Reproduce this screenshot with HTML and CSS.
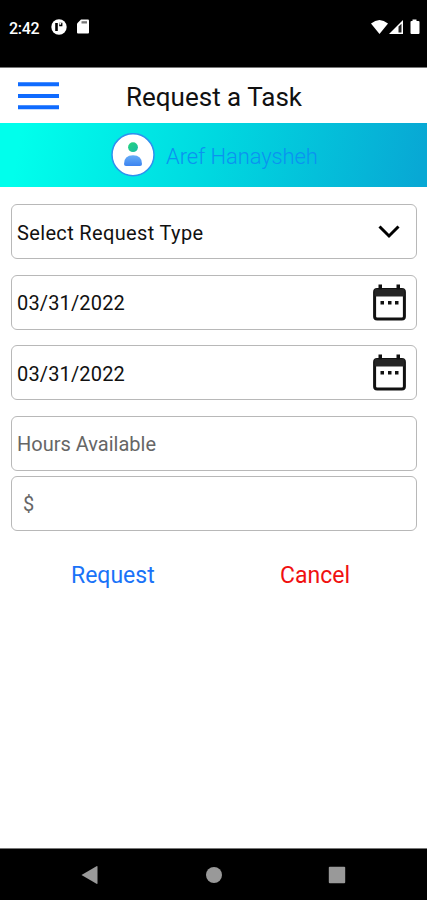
FILE: index.html
```html
<!DOCTYPE html>
<html lang="en">
<head>
  <meta charset="UTF-8">
  <meta name="viewport" content="width=device-width, initial-scale=1.0">
  <title>Request a Task</title>
  <link rel="stylesheet" href="styles.css">
</head>
<body>
  <div class="status-bar">
    <span class="time">2:42</span>
    <svg class="app-icon" width="16" height="16" viewBox="0 0 16 16">
      <circle cx="8" cy="8" r="7.7" fill="#fff"/>
      <path d="M4.200 4h2.600v8H4.200zM8.200 3.800h3.200v3.400H8.200z" fill="#000"/>
      <circle cx="9.300" cy="4.800" r="1" fill="#fff"/>
    </svg>
    <svg class="sd-icon" width="12" height="15" viewBox="0 0 12 15">
      <path d="M4 .5h7q1 0 1 1v12q0 1-1 1H1q-1 0-1-1V4.500z" fill="#fff"/>
      <path d="M4.500 2.200h5.500v2.300H4.500z" fill="#777"/>
    </svg>
    <svg class="signals" width="50" height="16" viewBox="0 0 50 16">
      <path d="M1 4.500Q9.500 -2.500 18 4.500L9.500 15z" fill="#fff"/>
      <path d="M19 15L33 1v14z" fill="#fff"/>
      <path d="M28.500 7.500l3-2.800v8.800h-3z" fill="#222"/>
      <path d="M42.500 .5h4v1.500h2q1 0 1 1v11q0 1-1 1h-7q-1 0-1-1V3q0-1 1-1h1z" fill="#fff"/>
    </svg>
  </div>

  <div class="header">
    <svg class="menu" width="41" height="28" viewBox="0 0 41 28">
      <path d="M0 2.200h41M0 13.900h41M0 25.200h41" stroke="#0f6bff" stroke-width="4"/>
    </svg>
    <h1>Request a Task</h1>
  </div>

  <div class="user">
    <svg width="44" height="44" viewBox="0 0 44 44">
      <defs>
        <linearGradient id="head" x1="0" y1="0" x2="1" y2="1">
          <stop offset="0" stop-color="#25d57c"/>
          <stop offset="1" stop-color="#18b9a6"/>
        </linearGradient>
        <linearGradient id="body" x1="0" y1="0" x2="0" y2="1">
          <stop offset="0" stop-color="#67adf7"/>
          <stop offset="1" stop-color="#3c83f0"/>
        </linearGradient>
      </defs>
      <circle cx="22" cy="21.700" r="21" fill="#fff" stroke="#2e90ef" stroke-width="1.500"/>
      <circle cx="22" cy="14.200" r="4.900" fill="url(#head)"/>
      <path d="M13 31Q13 22.300 22 22.300T31 31Q31 33 29 33H15Q13 33 13 31z" fill="url(#body)"/>
    </svg>
    <span class="user-name">Aref Hanaysheh</span>
  </div>

  <div class="form">
    <div class="field">
      <span class="select-text">Select Request Type</span>
      <svg class="arrow" width="22" height="14" viewBox="0 0 22 14">
        <path d="M1.500 1.500L11 11L20.500 1.500" fill="none" stroke="#000" stroke-width="3"/>
      </svg>
    </div>
    <div class="field">
      <span class="date">03/31/2022</span>
      <svg class="calendar" width="33" height="37" viewBox="0 0 33 37">
        <rect x="1.600" y="5.500" width="29.800" height="29.500" rx="2.500" fill="#fff" stroke="#111" stroke-width="3"/>
        <path d="M1.500 5h30v7.500h-30z" fill="#252525"/>
        <path d="M5.500 .5h3.500v5H5.500zM23.500 .5h3.500v5h-3.500z" fill="#111"/>
        <path d="M7.500 17h3.500v3.500H7.500zM15 17h3.500v3.500H15zM22 17h3.500v3.500H22z" fill="#111"/>
      </svg>
    </div>
    <div class="field">
      <span class="date">03/31/2022</span>
      <svg class="calendar" width="33" height="37" viewBox="0 0 33 37">
        <rect x="1.600" y="5.500" width="29.800" height="29.500" rx="2.500" fill="#fff" stroke="#111" stroke-width="3"/>
        <path d="M1.500 5h30v7.500h-30z" fill="#252525"/>
        <path d="M5.500 .5h3.500v5H5.500zM23.500 .5h3.500v5h-3.500z" fill="#111"/>
        <path d="M7.500 17h3.500v3.500H7.500zM15 17h3.500v3.500H15zM22 17h3.500v3.500H22z" fill="#111"/>
      </svg>
    </div>
    <div class="field hours"><span class="placeholder">Hours Available</span></div>
    <div class="field"><span class="placeholder dollar">$</span></div>
  </div>

  <div class="actions">
    <span class="request">Request</span>
    <span class="cancel">Cancel</span>
  </div>

  <div class="nav-bar">
    <svg width="18" height="20" viewBox="0 0 18 20"><path d="M.5 10L15.500 1.200q1-.4 1 .6v16.400q0 1-1 .6z" fill="#999"/></svg>
    <svg width="18" height="18" viewBox="0 0 18 18"><circle cx="9" cy="9" r="8" fill="#999"/></svg>
    <svg width="18" height="18" viewBox="0 0 18 18"><rect x=".8" y=".8" width="16.400" height="16.400" rx="1" fill="#999"/></svg>
  </div>
</body>
</html>
```
FILE: styles.css
```css
* {
  box-sizing: border-box;
}
body {
  margin: 0;
  height: 900px;
  display: flex;
  flex-direction: column;
  background: #fff;
  color: #111;
  font-family: Roboto, sans-serif;
  overflow: hidden;
}
svg {
  display: block;
  flex: none;
}
.status-bar {
  height: 68px;
  padding: 19px 7px 0 9px;
  display: flex;
  align-items: flex-start;
  background: #000;
  border-bottom: 1px solid #777;
}
.time {
  width: 42px;
  color: #fff;
  font-size: 16px;
  font-weight: 500;
  letter-spacing: -0.3px;
  line-height: 19px;
}
.sd-icon {
  margin-left: 10px;
}
.signals {
  margin-left: auto;
}
.header {
  height: 55px;
  padding-left: 18px;
  display: flex;
  align-items: center;
}
h1 {
  margin: 3px 0 0 67px;
  font-size: 26px;
  font-weight: 400;
  line-height: 32px;
}
.user {
  height: 64px;
  padding-left: 111px;
  display: flex;
  align-items: center;
  background: linear-gradient(100deg, #00ffec 5%, #00d8e0 50%, #08a8d4 98%);
}
.user-name {
  margin: 3px 0 0 11px;
  color: #0b92f0;
  font-size: 22px;
  font-weight: 300;
  letter-spacing: -0.1px;
  line-height: 28px;
}
.form {
  padding: 17px 10px 0 11px;
}
.field {
  height: 55px;
  margin-bottom: 15.5px;
  padding: 0 10px 0 5px;
  display: flex;
  align-items: center;
  justify-content: space-between;
  border: 1.5px solid #b8b8b8;
  border-radius: 6px;
  font-size: 20px;
  line-height: 26px;
}
.field span {
  padding-top: 2px;
}
.select-text {
  letter-spacing: 0.35px;
}
.date {
  letter-spacing: 0.15px;
}
.hours {
  margin-bottom: 5px;
}
.arrow {
  margin-right: 6px;
}
.placeholder {
  color: #666;
}
.dollar {
  margin-left: 6px;
}
.actions {
  margin-top: 16px;
  display: flex;
  font-size: 23px;
  line-height: 28px;
}
.request {
  width: 210px;
  padding-left: 71px;
  color: #1a73f8;
}
.cancel {
  padding-left: 70px;
  color: #f01010;
}
.nav-bar {
  height: 52px;
  margin-top: auto;
  padding: 0 81px;
  display: flex;
  align-items: center;
  justify-content: space-between;
  background: #000;
  border-top: 1px solid #777;
}
```
